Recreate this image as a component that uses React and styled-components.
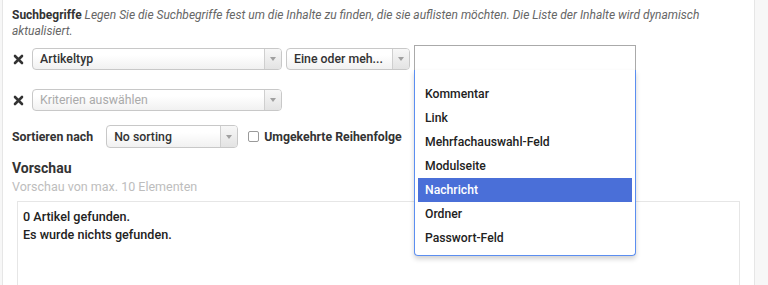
import React from 'react';
import styled, { createGlobalStyle } from 'styled-components';

const GlobalStyle = createGlobalStyle`
  html, body {
    margin: 0;
    padding: 0;
    background: #f7f7f7;
  }
  body {
    font-family: Roboto, "Liberation Sans", Arial, sans-serif;
    font-size: 12px;
    color: #333;
  }
`;

const Page = styled.div`
  display: flex;
  width: 768px;
  height: 285px;
  overflow: hidden;
  background: #f7f7f7;
`;

const Panel = styled.div`
  position: relative;
  margin-left: 2px;
  width: 753px;
  background: #fff;
  border-left: 1px solid #e6e6e6;
  border-right: 1px solid #e6e6e6;
  padding: 7px 0 0 9px;
  box-sizing: border-box;
`;

const Intro = styled.p`
  margin: 0;
  width: 730px;
  line-height: 16px;
  color: #666;
  font-style: italic;

  b {
    font-style: normal;
    font-weight: 700;
    color: #333;
  }
`;

const Row = styled.div`
  display: flex;
  align-items: center;
  gap: 4px;
  margin-top: ${p => p.$top}px;
  height: ${p => p.$height || 22}px;
`;

const Remove = styled.span`
  display: flex;
  align-items: center;
  justify-content: center;
  width: 12px;
  margin-right: 4px;
`;

const Select = styled.div`
  display: flex;
  width: ${p => p.$width}px;
  height: 100%;
  box-sizing: border-box;
  border: 1px solid #c8c8c8;
  border-radius: 4px;
  background: linear-gradient(#ffffff 30%, #f1f1f1);
  overflow: hidden;
`;

const SelectText = styled.span`
  flex: 1;
  display: flex;
  align-items: center;
  padding-left: 7px;
  font-size: 12.3px;
  color: ${p => (p.$placeholder ? '#aaa' : '#333')};
  font-weight: ${p => (p.$placeholder ? 400 : 500)};
  white-space: nowrap;
`;

const Arrow = styled.span`
  width: 16px;
  display: flex;
  align-items: center;
  justify-content: center;
  border-left: 1px solid #cfcfcf;
  background: linear-gradient(#f7f7f7, #e3e3e3);

  &::after {
    content: '';
    border-left: 3px solid transparent;
    border-right: 3px solid transparent;
    border-top: 4px solid #a0a0a0;
  }
`;

const Label = styled.span`
  font-size: 12.3px;
  font-weight: 700;
  color: #333;
  margin-right: 9px;
`;

const CheckLabel = styled.label`
  display: flex;
  align-items: center;
  gap: 5px;
  margin-left: 6px;
  font-size: 12.3px;
  font-weight: 700;
  color: #333;
`;

const Checkbox = styled.span`
  width: 9px;
  height: 9px;
  border: 1px solid #9a9a9a;
  border-radius: 2px;
  background: #fff;
`;

const Heading = styled.h3`
  margin: 11px 0 0 0;
  font-size: 14px;
  line-height: 18px;
  font-weight: 700;
  color: #333;
`;

const Sub = styled.div`
  margin-top: 2px;
  font-size: 12.5px;
  line-height: 16px;
  color: #bdbdbd;
`;

const PreviewBox = styled.div`
  margin: 6px 0 0 5px;
  width: 723px;
  height: 120px;
  box-sizing: border-box;
  border: 1px solid #e6e6e6;
  border-bottom: none;
  padding: 6px 0 0 5px;
  font-size: 12.6px;
  line-height: 18px;
  font-weight: 500;
  color: #222;
`;

const Dropdown = styled.div`
  position: absolute;
  left: 411px;
  top: 45px;
  width: 222px;
`;

const SearchField = styled.div`
  height: 25px;
  box-sizing: border-box;
  border: 1px solid #aaa;
  border-bottom: none;
  background: #fff;
`;

const List = styled.ul`
  list-style: none;
  margin: 0;
  padding: 12px 3px 6px;
  height: 186px;
  box-sizing: border-box;
  border: 1px solid #5b8ef0;
  border-top: none;
  border-radius: 0 0 4px 4px;
  background: #fff;
  box-shadow: 0 3px 5px rgba(0, 0, 0, 0.18);
  overflow: hidden;
`;

const Item = styled.li`
  height: 24px;
  display: flex;
  align-items: center;
  padding-left: 7px;
  font-size: 12.2px;
  font-weight: 500;
  color: ${p => (p.$active ? '#fff' : '#222')};
  background: ${p => (p.$active ? '#4a6fd8' : 'transparent')};
`;

const Filler = styled.div`
  flex: 1;
  background: #f7f7f7;
`;

const RemoveIcon = () => (
  <svg width="11" height="11" viewBox="0 0 11 11">
    <path d="M2 2 L9 9 M9 2 L2 9" stroke="#333" strokeWidth="2.6" strokeLinecap="round" />
  </svg>
);

const items = ['Kommentar', 'Link', 'Mehrfachauswahl-Feld', 'Modulseite', 'Nachricht', 'Ordner', 'Passwort-Feld'];

export default function App() {
  return (
    <Page>
      <GlobalStyle />
      <Panel>
        <Intro>
          <b>Suchbegriffe</b> Legen Sie die Suchbegriffe fest um die Inhalte zu finden, die sie auflisten möchten. Die Liste der Inhalte wird dynamisch aktualisiert.
        </Intro>
        <Row $top={9}>
          <Remove><RemoveIcon /></Remove>
          <Select $width={250}>
            <SelectText>Artikeltyp</SelectText>
            <Arrow />
          </Select>
          <Select $width={124}>
            <SelectText>Eine oder meh...</SelectText>
            <Arrow />
          </Select>
        </Row>
        <Row $top={19}>
          <Remove><RemoveIcon /></Remove>
          <Select $width={250}>
            <SelectText $placeholder>Kriterien auswählen</SelectText>
            <Arrow />
          </Select>
        </Row>
        <Row $top={14} $height={23}>
          <Label>Sortieren nach</Label>
          <Select $width={132}>
            <SelectText>No sorting</SelectText>
            <Arrow />
          </Select>
          <CheckLabel>
            <Checkbox />
            Umgekehrte Reihenfolge
          </CheckLabel>
        </Row>
        <Heading>Vorschau</Heading>
        <Sub>Vorschau von max. 10 Elementen</Sub>
        <PreviewBox>
          <div>0 Artikel gefunden.</div>
          <div>Es wurde nichts gefunden.</div>
        </PreviewBox>
        <Dropdown>
          <SearchField />
          <List>
            {items.map(name => (
              <Item key={name} $active={name === 'Nachricht'}>{name}</Item>
            ))}
          </List>
        </Dropdown>
      </Panel>
      <Filler />
    </Page>
  );
}
